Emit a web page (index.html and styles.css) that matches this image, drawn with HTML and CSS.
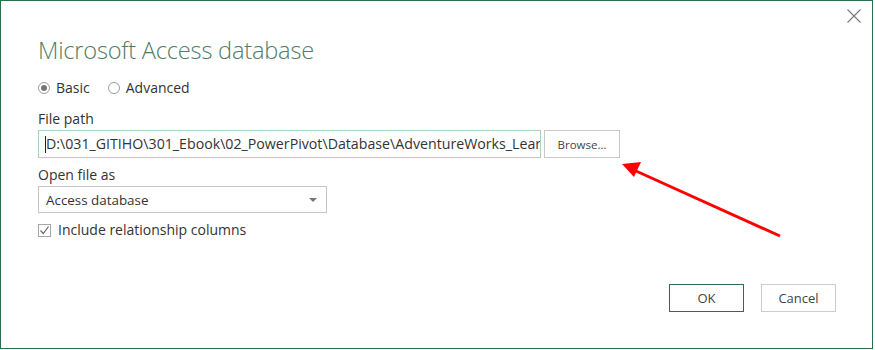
FILE: index.html
```html
<!DOCTYPE html>
<html lang="en">
<head>
    <meta charset="UTF-8">
    <title>Microsoft Access database</title>
    <link rel="stylesheet" href="styles.css">
</head>
<body>
    <div class="dialog">
        <button class="close-button" aria-label="Close">
            <svg width="14" height="14" viewBox="0 0 14 14"><path d="M0.5 0.5 L13.5 13.5 M13.5 0.5 L0.5 13.5" stroke="#777" stroke-width="1.1" fill="none"/></svg>
        </button>

        <h1 class="title">Microsoft Access database</h1>

        <div class="mode-row">
            <label class="radio"><span class="radio-dot checked"></span>Basic</label>
            <label class="radio"><span class="radio-dot"></span>Advanced</label>
        </div>

        <div class="field-label">File path</div>
        <div class="path-row">
            <div class="path-input"><span class="caret"></span><span class="path-text">D:\031_GITIHO\301_Ebook\02_PowerPivot\Database\AdventureWorks_Learning.accdb</span></div>
            <button class="browse-button">Browse...</button>
        </div>

        <div class="field-label second">Open file as</div>
        <div class="select-box">
            <span>Access database</span>
            <svg width="8" height="4" viewBox="0 0 8 4"><path d="M0 0 L8 0 L4 4 Z" fill="#777"/></svg>
        </div>

        <label class="check-row">
            <span class="check-box">
                <svg width="11" height="11" viewBox="0 0 11 11"><path d="M1.5 5.5 L4.3 8.5 L9.5 1.5" stroke="#666" stroke-width="1.2" fill="none"/></svg>
            </span>
            Include relationship columns
        </label>

        <div class="footer">
            <button class="dialog-button primary">OK</button>
            <button class="dialog-button">Cancel</button>
        </div>

        <svg class="pointer-arrow" width="875" height="350" viewBox="0 0 875 350">
            <line x1="780" y1="236" x2="636" y2="171" stroke="#f00" stroke-width="3"/>
            <path d="M622 164 L641 162 L634 177 Z" fill="#f00"/>
        </svg>
    </div>
</body>
</html>
```

FILE: styles.css
```css
html, body {
    margin: 0;
    background-color: #ffffff;
}
body {
    width: 875px;
    height: 350px;
    font-family: 'Open Sans', 'Noto Sans', sans-serif;
    color: #333333;
}
.dialog {
    position: relative;
    box-sizing: border-box;
    width: 873px;
    height: 349px;
    border: 1px solid #2b6e4b;
    padding: 0 36px 0 37px;
    display: flex;
    flex-direction: column;
}
.close-button {
    position: absolute;
    top: 7px;
    right: 10px;
    width: 16px;
    height: 16px;
    padding: 1px;
    border: none;
    background: none;
}
.title {
    margin: 33px 0 0 0;
    font-size: 23.6px;
    line-height: 32px;
    font-weight: 300;
    color: #4f7d66;
    letter-spacing: -0.2px;
}
.mode-row {
    display: flex;
    gap: 18px;
    margin-top: 12px;
    font-size: 14px;
    line-height: 20px;
}
.radio {
    display: flex;
    align-items: center;
    gap: 6px;
}
.radio-dot {
    box-sizing: border-box;
    width: 12px;
    height: 12px;
    border: 1px solid #9a9a9a;
    border-radius: 50%;
    display: flex;
    align-items: center;
    justify-content: center;
}
.radio-dot.checked::after {
    content: "";
    width: 6px;
    height: 6px;
    border-radius: 50%;
    background-color: #777777;
}
.field-label {
    margin-top: 11px;
    font-size: 14px;
    line-height: 20px;
}
.field-label.second {
    margin-top: 7px;
}
.path-row {
    display: flex;
    gap: 3px;
    margin-top: 1px;
}
.path-input {
    box-sizing: border-box;
    width: 503px;
    height: 28px;
    border: 1px solid #a9d2bd;
    padding: 0 0 0 6px;
    font-size: 14.2px;
    line-height: 26px;
    white-space: nowrap;
    display: flex;
    align-items: center;
    overflow: hidden;
}
.path-text {
    flex: 1;
    min-width: 0;
    overflow: hidden;
}
.caret {
    flex: none;
    width: 1px;
    height: 17px;
    background-color: #222222;
}
.browse-button {
    box-sizing: border-box;
    width: 76px;
    height: 28px;
    border: 1px solid #c9c9c9;
    background-color: #ffffff;
    font-family: 'Open Sans', 'Noto Sans', sans-serif;
    font-size: 11.5px;
    color: #444444;
    padding: 0;
}
.select-box {
    box-sizing: border-box;
    width: 289px;
    height: 27px;
    margin-top: 1px;
    border: 1px solid #c6c6c6;
    padding: 0 9px 0 7px;
    display: flex;
    align-items: center;
    justify-content: space-between;
    font-size: 13.4px;
}
.check-row {
    display: flex;
    align-items: center;
    gap: 7px;
    margin-top: 8px;
    font-size: 14px;
    line-height: 18px;
}
.check-box {
    box-sizing: border-box;
    width: 13px;
    height: 13px;
    border: 1px solid #a6a6a6;
    display: flex;
    align-items: center;
    justify-content: center;
}
.footer {
    display: flex;
    justify-content: flex-end;
    gap: 17px;
    margin-top: 45px;
}
.dialog-button {
    box-sizing: border-box;
    width: 75px;
    height: 28px;
    border: 1px solid #cccccc;
    background-color: #ffffff;
    font-family: 'Open Sans', 'Noto Sans', sans-serif;
    font-size: 13px;
    color: #444444;
    padding: 0;
}
.dialog-button.primary {
    border-color: #2b6e4b;
}
.pointer-arrow {
    position: absolute;
    top: -1px;
    left: -1px;
    pointer-events: none;
}
```
